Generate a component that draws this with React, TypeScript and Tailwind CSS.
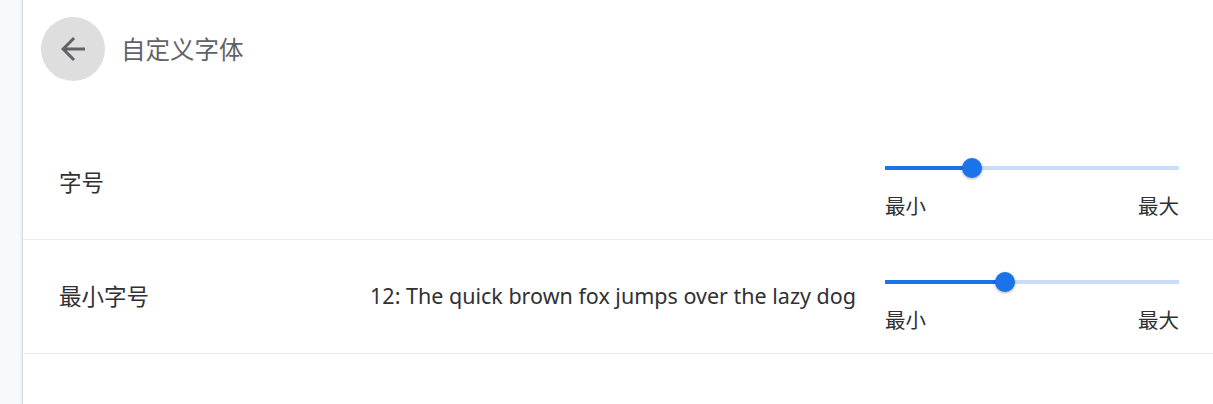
import { useState } from 'react';

const font = '"Noto Sans", "Noto Sans CJK SC", sans-serif';

function Slider({ value }: { value: number }) {
  return (
    <div className="w-[294px] shrink-0 self-start pt-[32px]">
      <div className="relative h-5">
        <div className="absolute left-0 right-0 top-[8px] h-[4px] bg-[#c9dcfb]" />
        <div className="absolute left-0 top-[8px] h-[4px] bg-[#1a73e8]" style={{ width: `${value * 100}%` }} />
        <div
          className="absolute top-0 h-5 w-5 -translate-x-1/2 rounded-full bg-[#1a73e8] shadow-[0_1px_3px_rgba(0,0,0,0.35)]"
          style={{ left: `${value * 100}%` }}
        />
      </div>
      <div className="mt-[14px] flex justify-between text-[20.5px] leading-7 text-[#303134]">
        <span>最小</span>
        <span>最大</span>
      </div>
    </div>
  );
}

export default function App() {
  const [rows] = useState([
    { label: '字号', sample: '', value: 0.295 },
    { label: '最小字号', sample: '12: The quick brown fox jumps over the lazy dog', value: 0.407 },
  ]);

  return (
    <div className="flex h-[404px] w-[1213px] bg-[#f8f9fa]" style={{ fontFamily: font }}>
      <div className="w-[22px] shrink-0" />
      <div className="flex-1 border-l border-[#dadce0] bg-white shadow-[-1px_0_2px_rgba(0,0,0,0.08)]">
        <div className="flex h-[98px] items-center gap-4 pl-[18px]">
          <button className="flex h-16 w-16 items-center justify-center rounded-full bg-[#dedede]">
            <svg width="36" height="36" viewBox="0 0 24 24" fill="#5f6368">
              <path d="M20 11H7.83l5.59-5.59L12 4l-8 8 8 8 1.41-1.41L7.83 13H20v-2z" />
            </svg>
          </button>
          <h1 className="pt-[3px] text-[24.5px] text-[#5f6368]">自定义字体</h1>
        </div>
        <div className="mt-[28px]">
          {rows.map((row) => (
            <div key={row.label} className="flex h-[114px] items-center border-b border-[#ececec] pl-[36px] pr-[34px]">
              <div className="flex-1 text-[22.5px] text-[#303134]">{row.label}</div>
              {row.sample && (
                <div className="mr-[29px] text-[21.5px] text-[#303134]">{row.sample}</div>
              )}
              <Slider value={row.value} />
            </div>
          ))}
        </div>
      </div>
    </div>
  );
}
